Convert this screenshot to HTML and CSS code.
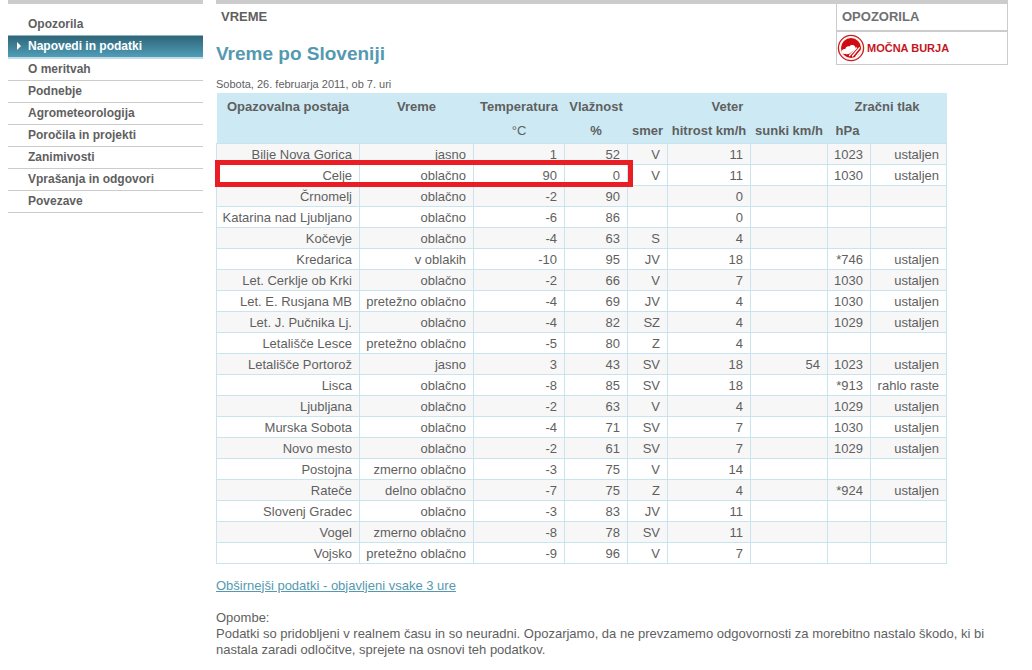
FILE: index.html
```html
<!DOCTYPE html>
<html lang="sl">
<head>
<meta charset="utf-8">
<title>Vreme po Sloveniji</title>
<link rel="stylesheet" href="styles.css">
</head>
<body>
<div class="page">
  <nav class="menu">
    <a href="#">Opozorila</a>
    <a href="#" class="active">Napovedi in podatki</a>
    <a href="#">O meritvah</a>
    <a href="#">Podnebje</a>
    <a href="#">Agrometeorologija</a>
    <a href="#">Poročila in projekti</a>
    <a href="#">Zanimivosti</a>
    <a href="#">Vprašanja in odgovori</a>
    <a href="#">Povezave</a>
  </nav>
  <main class="content">
    <div class="head">
      <div class="headings">
        <div class="section">VREME</div>
        <h1>Vreme po Sloveniji</h1>
      </div>
      <aside class="alerts">
        <div class="alerts-title">OPOZORILA</div>
        <a href="#" class="alert">
          <svg width="28" height="28" viewBox="0 0 28 28" aria-hidden="true">
            <circle cx="14" cy="14" r="12.600" fill="#fff4ea" stroke="#c4202a" stroke-width="1.300"/>
            <circle cx="14" cy="14" r="10" fill="#cf0c14"/>
            <path d="M4.500 17.500c.4-1.800 2-2.700 3.700-2.300.5-2.200 2.300-3.300 4.300-2.700 1.200-1.900 4.700-2 5.700.3 1.200 1.800-.2 3.200-1.800 3.600l-3.400 2.800c-1.500 1.300-3.300 1.500-4.500.6-1.500.6-3.600 0-4-2.300z" fill="#fff"/>
            <path d="M19.500 14l-7 7.500M22.300 13.800l-6.800 8.200M23.500 17l-4.500 5.500" fill="none" stroke="#fff" stroke-width="1.300" stroke-linecap="round"/>
          </svg>
          <span>MOČNA BURJA</span>
        </a>
      </aside>
    </div>
    <p class="date">Sobota, 26. februarja 2011, ob 7. uri</p>
    <table class="weather">
      <colgroup><col class="c-station"><col class="c-weather"><col class="c-temp"><col class="c-hum"><col class="c-dir"><col class="c-speed"><col class="c-gust"><col class="c-hpa"><col class="c-trend"></colgroup>
      <thead>
        <tr><th>Opazovalna postaja</th><th>Vreme</th><th>Temperatura</th><th>Vlažnost</th><th colspan="3">Veter</th><th colspan="2">Zračni tlak</th></tr>
        <tr><th></th><th></th><th class="unit">°C</th><th>%</th><th>smer</th><th>hitrost km/h</th><th>sunki km/h</th><th class="left">hPa</th><th></th></tr>
      </thead>
      <tbody>
        <tr><td>Bilje Nova Gorica</td><td>jasno</td><td>1</td><td>52</td><td>V</td><td>11</td><td></td><td>1023</td><td>ustaljen</td></tr>
        <tr class="marked"><td>Celje<span class="marker"></span></td><td>oblačno</td><td>90</td><td>0</td><td>V</td><td>11</td><td></td><td>1030</td><td>ustaljen</td></tr>
        <tr><td>Črnomelj</td><td>oblačno</td><td>-2</td><td>90</td><td></td><td>0</td><td></td><td></td><td></td></tr>
        <tr><td>Katarina nad Ljubljano</td><td>oblačno</td><td>-6</td><td>86</td><td></td><td>0</td><td></td><td></td><td></td></tr>
        <tr><td>Kočevje</td><td>oblačno</td><td>-4</td><td>63</td><td>S</td><td>4</td><td></td><td></td><td></td></tr>
        <tr><td>Kredarica</td><td>v oblakih</td><td>-10</td><td>95</td><td>JV</td><td>18</td><td></td><td>*746</td><td>ustaljen</td></tr>
        <tr><td>Let. Cerklje ob Krki</td><td>oblačno</td><td>-2</td><td>66</td><td>V</td><td>7</td><td></td><td>1030</td><td>ustaljen</td></tr>
        <tr><td>Let. E. Rusjana MB</td><td>pretežno oblačno</td><td>-4</td><td>69</td><td>JV</td><td>4</td><td></td><td>1030</td><td>ustaljen</td></tr>
        <tr><td>Let. J. Pučnika Lj.</td><td>oblačno</td><td>-4</td><td>82</td><td>SZ</td><td>4</td><td></td><td>1029</td><td>ustaljen</td></tr>
        <tr><td>Letališče Lesce</td><td>pretežno oblačno</td><td>-5</td><td>80</td><td>Z</td><td>4</td><td></td><td></td><td></td></tr>
        <tr><td>Letališče Portorož</td><td>jasno</td><td>3</td><td>43</td><td>SV</td><td>18</td><td>54</td><td>1023</td><td>ustaljen</td></tr>
        <tr><td>Lisca</td><td>oblačno</td><td>-8</td><td>85</td><td>SV</td><td>18</td><td></td><td>*913</td><td>rahlo raste</td></tr>
        <tr><td>Ljubljana</td><td>oblačno</td><td>-2</td><td>63</td><td>V</td><td>4</td><td></td><td>1029</td><td>ustaljen</td></tr>
        <tr><td>Murska Sobota</td><td>oblačno</td><td>-4</td><td>71</td><td>SV</td><td>7</td><td></td><td>1030</td><td>ustaljen</td></tr>
        <tr><td>Novo mesto</td><td>oblačno</td><td>-2</td><td>61</td><td>SV</td><td>7</td><td></td><td>1029</td><td>ustaljen</td></tr>
        <tr><td>Postojna</td><td>zmerno oblačno</td><td>-3</td><td>75</td><td>V</td><td>14</td><td></td><td></td><td></td></tr>
        <tr><td>Rateče</td><td>delno oblačno</td><td>-7</td><td>75</td><td>Z</td><td>4</td><td></td><td>*924</td><td>ustaljen</td></tr>
        <tr><td>Slovenj Gradec</td><td>oblačno</td><td>-3</td><td>83</td><td>JV</td><td>11</td><td></td><td></td><td></td></tr>
        <tr><td>Vogel</td><td>zmerno oblačno</td><td>-8</td><td>78</td><td>SV</td><td>11</td><td></td><td></td><td></td></tr>
        <tr><td>Vojsko</td><td>pretežno oblačno</td><td>-9</td><td>96</td><td>V</td><td>7</td><td></td><td></td><td></td></tr>
      </tbody>
    </table>
    <p class="more"><a href="#">Obširnejši podatki - objavljeni vsake 3 ure</a></p>
    <p class="notes">Opombe:<br>Podatki so pridobljeni v realnem času in so neuradni. Opozarjamo, da ne prevzamemo odgovornosti za morebitno nastalo škodo, ki bi nastala zaradi odločitve, sprejete na osnovi teh podatkov.</p>
  </main>
</div>
</body>
</html>
```
FILE: styles.css
```css
body {
  margin: 0;
  background: #fff;
  color: #5f5f5f;
  font-family: "Liberation Sans", Arial, sans-serif;
  font-size: 13px;
  line-height: 16px;
}

.page {
  display: grid;
  grid-template-columns: 195px 1fr;
  gap: 13px;
  align-items: start;
  padding: 0 24px 0 8px;
}

.menu {
  display: flex;
  flex-direction: column;
  padding-top: 10px;
  border-top: 4px solid #ccc;
}

.menu a {
  padding-left: 20px;
  border-bottom: 1px solid #ccc;
  color: #5f5f5f;
  font-size: 12px;
  font-weight: bold;
  line-height: 21px;
  text-decoration: none;
}

.menu a:first-child {
  border-color: #8fb4c2;
}

.menu .active {
  position: relative;
  border-bottom: 2px solid #c3dce6;
  background: linear-gradient(#2f6578, #4f9db8);
  color: #fff;
}

.menu .active::before {
  content: "";
  position: absolute;
  top: 6px;
  left: 9px;
  border: 4px solid transparent;
  border-left: 4px solid #fff;
  border-right: 0;
}

.content {
  border-top: 4px solid #ccc;
}

.head {
  display: flex;
  justify-content: space-between;
  align-items: flex-start;
}

.section {
  padding: 5px;
  font-weight: bold;
}

h1 {
  margin: 12px 0 0;
  color: #5599b0;
  font-size: 19px;
  line-height: 24px;
}

.alerts {
  box-sizing: border-box;
  width: 172px;
  border: 1px solid #ccc;
  border-top: 0;
}

.alerts-title {
  padding: 5px;
  border-bottom: 2px solid #ccc;
  color: #707070;
  font-weight: bold;
}

.alert {
  display: flex;
  align-items: center;
  gap: 2px;
  height: 32px;
  color: #c4161c;
  font-size: 11px;
  font-weight: bold;
  text-decoration: none;
}

.date {
  margin: 10px 0 0;
  font-size: 11px;
  line-height: 16px;
}

.weather {
  width: 731px;
  margin-top: 1px;
  border-collapse: collapse;
  table-layout: fixed;
}

.c-station { width: 143px; }
.c-weather { width: 114px; }
.c-temp { width: 91px; }
.c-hum { width: 63px; }
.c-dir { width: 40px; }
.c-speed { width: 83px; }
.c-gust { width: 77px; }
.c-hpa { width: 43px; }
.c-trend { width: 76px; }

.weather th {
  box-sizing: border-box;
  height: 25px;
  padding: 2px 0 0;
  background: #cdeaf4;
  white-space: nowrap;
}

.weather .unit {
  font-weight: normal;
}

.weather .left {
  padding-left: 8px;
  text-align: left;
}

.weather td {
  box-sizing: border-box;
  height: 21px;
  padding: 2px 7px 0 0;
  border: 1px solid #c9e4ee;
  text-align: right;
  white-space: nowrap;
}

.weather tbody tr:nth-child(odd) {
  background: #f7f7f8;
}

.marked {
  position: relative;
}

.marker {
  position: absolute;
  top: -4px;
  left: -2px;
  box-sizing: border-box;
  width: 418px;
  height: 27px;
  border: 5px solid #ea1c24;
}

.more {
  margin: 14px 0 16px;
}

.more a {
  color: #5599b0;
}

.notes {
  margin: 0;
}
```
